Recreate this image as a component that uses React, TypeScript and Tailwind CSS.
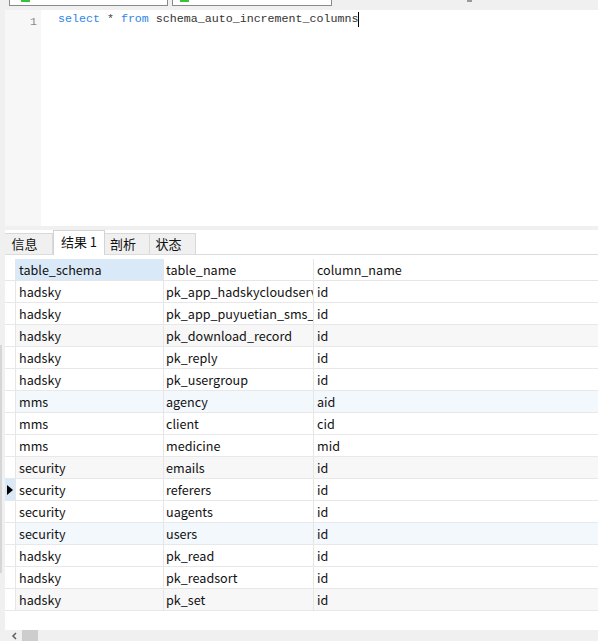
import React from "react";

const rows: { schema: string; table: string; column: string }[] = [
  { schema: "hadsky", table: "pk_app_hadskycloudserver", column: "id" },
  { schema: "hadsky", table: "pk_app_puyuetian_sms_record", column: "id" },
  { schema: "hadsky", table: "pk_download_record", column: "id" },
  { schema: "hadsky", table: "pk_reply", column: "id" },
  { schema: "hadsky", table: "pk_usergroup", column: "id" },
  { schema: "mms", table: "agency", column: "aid" },
  { schema: "mms", table: "client", column: "cid" },
  { schema: "mms", table: "medicine", column: "mid" },
  { schema: "security", table: "emails", column: "id" },
  { schema: "security", table: "referers", column: "id" },
  { schema: "security", table: "uagents", column: "id" },
  { schema: "security", table: "users", column: "id" },
  { schema: "hadsky", table: "pk_read", column: "id" },
  { schema: "hadsky", table: "pk_readsort", column: "id" },
  { schema: "hadsky", table: "pk_set", column: "id" },
];

const tabs = ["信息", "结果 1", "剖析", "状态"];
const tabWidths = ["w-[48px]", "w-[52px]", "w-[45px]", "w-[46px]"];

function rowBg(i: number) {
  if (i % 6 === 2) return "bg-[#f7f7f7]";
  if (i % 6 === 5) return "bg-[#f3f8fd]";
  return "bg-white";
}

export default function App() {
  const current = 9;
  return (
    <div
      className="w-[598px] h-[641px] bg-[#f0f0f0] flex flex-col overflow-hidden text-[12.6px] text-[#111]"
      style={{ fontFamily: '"Noto Sans CJK SC", "Noto Sans", sans-serif' }}
    >
      {/* top toolbar remnants */}
      <div className="h-[10px] flex items-start shrink-0">
        <div className="ml-[9px] w-[159px] h-[6px] bg-white border-x border-b border-[#8a8a8a] relative">
          <div className="absolute left-[11px] top-0 w-[9px] h-[2px] bg-[#3cc13c]" />
        </div>
        <div className="ml-[4px] w-[160px] h-[6px] bg-white border-x border-b border-[#8a8a8a] relative">
          <div className="absolute left-[7px] top-0 w-[9px] h-[2px] bg-[#3cc13c]" />
        </div>
        <div className="ml-[135px] w-[5px] h-[2px] bg-[#9a9a9a]" />
      </div>

      <div className="flex flex-1 min-h-0">
        <div className="w-[5px] shrink-0 flex flex-col">
          <div className="h-[335px]" />
          <div className="w-[2px] h-[228px] bg-[#d6d6d6]" />
        </div>

        <div className="flex-1 flex flex-col min-w-0">
          {/* editor */}
          <div className="h-[216px] flex shrink-0">
            <div className="w-[36px] bg-[#f7f7f7] text-right pr-[4px] pt-px">
              <span
                className="text-[11.6px] text-[#8a8a8a]"
                style={{ fontFamily: '"Liberation Mono", monospace' }}
              >
                1
              </span>
            </div>
            <div className="flex-1 bg-white pl-[17px] pt-px">
              <div
                className="text-[11.65px] leading-[16px] whitespace-pre flex items-center"
                style={{ fontFamily: '"Liberation Mono", monospace' }}
              >
                <span className="text-[#2f86e8]">select</span>
                <span className="text-[#444]"> * </span>
                <span className="text-[#2f86e8]">from</span>
                <span className="text-[#333]"> schema_auto_increment_columns</span>
                <span className="inline-block w-[1px] h-[15px] bg-black" />
              </div>
            </div>
          </div>

          <div className="h-[4px] shrink-0" />

          {/* result tabs */}
          <div className="h-[25px] shrink-0 bg-white border-b border-[#dcdcdc] flex items-end text-[13px]">
            {tabs.map((t, i) =>
              i === 1 ? (
                <div
                  key={t}
                  className={`${tabWidths[i]} h-[25px] -mb-px bg-white border-x border-t border-[#d4d4d4] flex items-center justify-center pb-[2px]`}
                >
                  {t}
                </div>
              ) : (
                <div
                  key={t}
                  className={`${tabWidths[i]} h-[21px] bg-[#f0f0f0] border-t border-r border-[#d9d9d9] flex items-center justify-center pr-[8px]`}
                >
                  {t}
                </div>
              )
            )}
          </div>

          {/* grid */}
          <div className="flex-1 bg-white pt-[4px] min-h-0">
            <div className="flex h-[22px] border-b border-[#e6e6e6]">
              <div className="w-[11px] shrink-0 border-r border-[#e6e6e6]" />
              <div className="w-[147px] shrink-0 bg-[#dae9f8] pl-[3px] pt-[2px] flex items-center">table_schema</div>
              <div className="w-[150px] shrink-0 border-l border-[#e6e6e6] pl-[2px] pt-[2px] flex items-center">table_name</div>
              <div className="flex-1 border-l border-[#e6e6e6] pl-[3px] pt-[2px] flex items-center">column_name</div>
            </div>
            {rows.map((r, i) => (
              <div key={i} className={`flex h-[22px] border-b border-[#e8e8e8] ${rowBg(i)}`}>
                <div
                  className={`w-[11px] shrink-0 border-r border-[#e6e6e6] flex items-center justify-center ${
                    i === current ? "bg-[#dae9f8]" : "bg-white"
                  }`}
                >
                  {i === current && (
                    <svg width="6" height="10" viewBox="0 0 6 10">
                      <path d="M0 0 L6 5 L0 10 Z" fill="#000" />
                    </svg>
                  )}
                </div>
                <div className="w-[147px] shrink-0 pl-[3px] pt-[2px] flex items-center overflow-hidden whitespace-nowrap">
                  {r.schema}
                </div>
                <div className="w-[150px] shrink-0 border-l border-[#e6e6e6] pl-[2px] pt-[2px] flex items-center overflow-hidden whitespace-nowrap">
                  {r.table}
                </div>
                <div className="flex-1 border-l border-[#e6e6e6] pl-[3px] pt-[2px] flex items-center overflow-hidden whitespace-nowrap">
                  {r.column}
                </div>
              </div>
            ))}
          </div>

          {/* horizontal scrollbar */}
          <div className="h-[11px] shrink-0 bg-[#f0f0f0] flex items-start">
            <svg width="17" height="11" viewBox="0 0 17 11" className="shrink-0">
              <path d="M11 3 L8 6 L11 9" stroke="#606060" strokeWidth="1.5" fill="none" />
            </svg>
            <div className="w-[16px] h-[11px] bg-[#cdcdcd]" />
          </div>
        </div>
      </div>
    </div>
  );
}
